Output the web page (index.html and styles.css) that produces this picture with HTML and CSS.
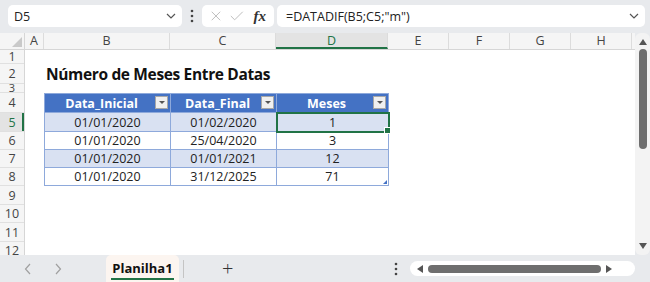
FILE: index.html
```html
<!DOCTYPE html>
<html lang="pt">
<head>
    <meta charset="UTF-8">
    <title>Planilha1</title>
    <link rel="stylesheet" href="styles.css">
</head>
<body>
    <div class="formula-bar">
        <div class="name-box">
            <span>D5</span>
            <svg class="chev" width="10" height="6" viewBox="0 0 10 6"><path d="M1 1 L5 5 L9 1" fill="none" stroke="#555" stroke-width="1.2"/></svg>
        </div>
        <svg class="dots" width="4" height="14" viewBox="0 0 4 14"><circle cx="2" cy="2" r="1.3" fill="#444"/><circle cx="2" cy="7" r="1.3" fill="#444"/><circle cx="2" cy="12" r="1.3" fill="#444"/></svg>
        <div class="fx-box">
            <svg width="14" height="14" viewBox="0 0 14 14"><path d="M2 2 L12 12 M12 2 L2 12" stroke="#b9b9b9" stroke-width="1.1"/></svg>
            <svg width="16" height="14" viewBox="0 0 16 14"><path d="M1 7 L5.5 11.5 L15 2" fill="none" stroke="#b9b9b9" stroke-width="1.1"/></svg>
            <span class="fx">fx</span>
        </div>
        <div class="formula">
            <span>=DATADIF(B5;C5;"m")</span>
            <svg class="chev" width="10" height="6" viewBox="0 0 10 6"><path d="M1 1 L5 5 L9 1" fill="none" stroke="#555" stroke-width="1.2"/></svg>
        </div>
    </div>

    <div class="main">
        <div class="sheet">
            <div class="col-heads">
                <div class="corner"><span class="tri"></span></div>
                <div class="ch col-a">A</div>
                <div class="ch col-b">B</div>
                <div class="ch col-c">C</div>
                <div class="ch col-d active">D</div>
                <div class="ch col-e">E</div>
                <div class="ch col-e">F</div>
                <div class="ch col-e">G</div>
                <div class="ch col-e">H</div>
            </div>
            <div class="sheet-body">
                <div class="row-heads">
                    <div>1</div>
                    <div>2</div>
                    <div class="short">3</div>
                    <div>4</div>
                    <div class="active">5</div>
                    <div>6</div>
                    <div>7</div>
                    <div>8</div>
                    <div>9</div>
                    <div>10</div>
                    <div>11</div>
                    <div>12</div>
                </div>
                <div class="cells">
                    <div class="title">Número de Meses Entre Datas</div>
                    <div class="tbl">
                        <div class="th">Data_Inicial<span class="filter"></span></div>
                        <div class="th">Data_Final<span class="filter"></span></div>
                        <div class="th">Meses<span class="filter"></span></div>

                        <div class="td band">01/01/2020</div>
                        <div class="td band">01/02/2020</div>
                        <div class="td band selected">1</div>

                        <div class="td">01/01/2020</div>
                        <div class="td">25/04/2020</div>
                        <div class="td">3</div>

                        <div class="td band">01/01/2020</div>
                        <div class="td band">01/01/2021</div>
                        <div class="td band">12</div>

                        <div class="td">01/01/2020</div>
                        <div class="td">31/12/2025</div>
                        <div class="td last">71</div>
                    </div>
                </div>
            </div>
        </div>
        <div class="vscroll">
            <svg width="10" height="8" viewBox="0 0 10 8"><path d="M1 7 L5 1 L9 7 Z" fill="#555"/></svg>
            <div class="vthumb"></div>
            <div class="grow"></div>
            <svg width="10" height="8" viewBox="0 0 10 8"><path d="M1 1 L5 7 L9 1 Z" fill="#555"/></svg>
        </div>
    </div>

    <div class="tab-bar">
        <div class="nav">
            <svg width="8" height="12" viewBox="0 0 8 12"><path d="M6 1 L1.5 6 L6 11" fill="none" stroke="#a0a0a0" stroke-width="1.2"/></svg>
            <svg width="8" height="12" viewBox="0 0 8 12"><path d="M2 1 L6.5 6 L2 11" fill="none" stroke="#a0a0a0" stroke-width="1.2"/></svg>
        </div>
        <div class="tab"><span>Planilha1</span></div>
        <div class="sep"></div>
        <div class="add">+</div>
        <div class="spacer"></div>
        <svg class="dots" width="4" height="14" viewBox="0 0 4 14"><circle cx="2" cy="2" r="1.3" fill="#444"/><circle cx="2" cy="7" r="1.3" fill="#444"/><circle cx="2" cy="12" r="1.3" fill="#444"/></svg>
        <div class="hscroll">
            <svg width="8" height="10" viewBox="0 0 8 10"><path d="M7 1 L1 5 L7 9 Z" fill="#555"/></svg>
            <div class="hthumb"></div>
            <svg width="8" height="10" viewBox="0 0 8 10"><path d="M1 1 L7 5 L1 9 Z" fill="#555"/></svg>
        </div>
    </div>
</body>
</html>
```

FILE: styles.css
```css
body {
    margin: 0;
    width: 650px;
    height: 282px;
    overflow: hidden;
    font-family: "Open Sans", "Noto Sans", sans-serif;
    background-color: #e8eaed;
    color: #222;
}

/* formula bar */
.formula-bar {
    display: flex;
    align-items: center;
    height: 33px;
    padding: 0 5px 1px 8px;
    box-sizing: border-box;
}

.name-box,
.fx-box,
.formula {
    display: flex;
    align-items: center;
    height: 22px;
    background-color: #ffffff;
    border-radius: 5px;
    font-size: 12.5px;
    box-sizing: border-box;
}

.name-box {
    width: 174px;
    padding: 0 6px 0 6px;
    justify-content: space-between;
}

.formula-bar .dots {
    margin: 0 8px 0 8px;
}

.fx-box {
    width: 72px;
    padding: 0 8px;
    gap: 8px;
}

.fx {
    font-family: "Liberation Serif", serif;
    font-style: italic;
    font-weight: bold;
    font-size: 15px;
    color: #333;
    margin-left: 2px;
}

.formula {
    flex: 1;
    margin-left: 3px;
    padding: 0 6px 0 9px;
    justify-content: space-between;
}

/* sheet */
.main {
    display: flex;
    height: 222px;
}

.sheet {
    width: 635px;
    background-color: #ffffff;
    overflow: hidden;
}

.col-heads {
    display: flex;
    height: 17px;
    background-color: #f5f5f5;
    border-bottom: 1px solid #d6d6d6;
    box-sizing: border-box;
}

.corner {
    width: 25px;
    position: relative;
    border-right: 1px solid #d6d6d6;
    box-sizing: border-box;
}

.corner .tri {
    position: absolute;
    right: 2px;
    bottom: 2px;
    border-left: 10px solid transparent;
    border-bottom: 10px solid #c9c9c9;
}

.ch {
    font-size: 12.5px;
    line-height: 16px;
    text-align: center;
    color: #444;
    border-right: 1px solid #dcdcdc;
    box-sizing: border-box;
}

.col-a { width: 19px; }
.col-b { width: 126px; }
.col-c { width: 106px; }
.col-d { width: 112px; }
.col-e { width: 61px; }

.ch.active {
    color: #217346;
    background-color: #e3e3e3;
    border-bottom: 2px solid #217346;
}

.sheet-body {
    display: flex;
}

.row-heads,
.cells {
    display: grid;
    grid-template-rows: 14px 20px 9px 20px 19px 18px 18px 18px 19px 18px 19px 18px;
}

.row-heads {
    width: 25px;
    background-color: #f5f5f5;
    border-right: 1px solid #d6d6d6;
    box-sizing: border-box;
}

.row-heads div {
    font-size: 12.5px;
    line-height: 13px;
    text-align: center;
    color: #444;
    border-bottom: 1px solid #e0e0e0;
    overflow: hidden;
    display: flex;
    align-items: center;
    justify-content: center;
}

.row-heads .short {
    align-items: flex-start;
    line-height: 8px;
    font-size: 11px;
}

.row-heads .active {
    color: #217346;
    background-color: #e3e3e3;
    box-shadow: inset -2px 0 0 #217346;
}

.title {
    grid-row: 2;
    margin-left: 21px;
    font-size: 15.5px;
    font-weight: bold;
    color: #111;
    line-height: 20px;
    letter-spacing: -0.35px;
}

.tbl {
    grid-row: 4 / 9;
    margin-left: 19px;
    display: grid;
    grid-template-columns: 126px 106px 112px;
    grid-template-rows: 20px 19px 18px 18px 18px;
    width: max-content;
    border-left: 1px solid #8ea9db;
    box-sizing: border-box;
}

.th,
.td {
    display: flex;
    align-items: center;
    justify-content: center;
    font-size: 12.5px;
    border-right: 1px solid #8ea9db;
    border-bottom: 1px solid #8ea9db;
    box-sizing: border-box;
    position: relative;
}

.th {
    background-color: #4472c4;
    color: #ffffff;
    font-weight: bold;
    padding-right: 12px;
    border-top: 1px solid #8ea9db;
}

.filter {
    position: absolute;
    right: 2px;
    top: 2px;
    width: 13px;
    height: 13px;
    background-color: #f0f0f0;
    border: 1px solid #a8a8a8;
    box-sizing: border-box;
}

.filter::after {
    content: "";
    position: absolute;
    left: 3px;
    top: 4px;
    border-left: 3px solid transparent;
    border-right: 3px solid transparent;
    border-top: 3px solid #555;
}

.td.band {
    background-color: #d9e1f2;
}

.td.selected {
    outline: 2px solid #217346;
    outline-offset: -1px;
    z-index: 1;
}

.td.selected::after {
    content: "";
    position: absolute;
    right: -3px;
    bottom: -3px;
    width: 5px;
    height: 5px;
    background-color: #217346;
    border: 1px solid #ffffff;
}

.td.last::after {
    content: "";
    position: absolute;
    right: 1px;
    bottom: 1px;
    border-left: 4px solid transparent;
    border-bottom: 4px solid #4472c4;
}

/* scrollbars */
.vscroll {
    width: 15px;
    display: flex;
    flex-direction: column;
    align-items: center;
    padding: 5px 0 5px;
    box-sizing: border-box;
    background-color: #f3f3f3;
    border-radius: 6px;
}

.vthumb {
    width: 8px;
    height: 100px;
    margin-top: 3px;
    background-color: #6e6e6e;
    border-radius: 4px;
}

.grow {
    flex: 1;
}

.tab-bar {
    display: flex;
    align-items: center;
    height: 27px;
}

.nav {
    width: 106px;
    display: flex;
    gap: 22px;
    padding-left: 24px;
    box-sizing: border-box;
}

.tab {
    width: 73px;
    height: 27px;
    background-color: #fcf5f0;
    border-radius: 5px 5px 0 0;
    display: flex;
    justify-content: center;
    align-items: center;
}

.tab span {
    font-size: 13px;
    font-weight: bold;
    color: #111;
    border-bottom: 2px solid #217346;
    line-height: 20px;
    padding: 0 1px;
}

.sep {
    width: 1px;
    height: 18px;
    background-color: #c4c4c4;
    margin-left: 4px;
}

.add {
    margin-left: 38px;
    font-size: 20px;
    font-weight: 300;
    color: #333;
    line-height: 20px;
}

.spacer {
    flex: 1;
}

.tab-bar .dots {
    margin-right: 12px;
}

.hscroll {
    width: 225px;
    height: 15px;
    margin-right: 15px;
    background-color: #ffffff;
    border-radius: 8px;
    display: flex;
    align-items: center;
    padding: 0 6px;
    gap: 4px;
    box-sizing: border-box;
}

.hthumb {
    width: 173px;
    height: 8px;
    background-color: #6e6e6e;
    border-radius: 4px;
}
```
